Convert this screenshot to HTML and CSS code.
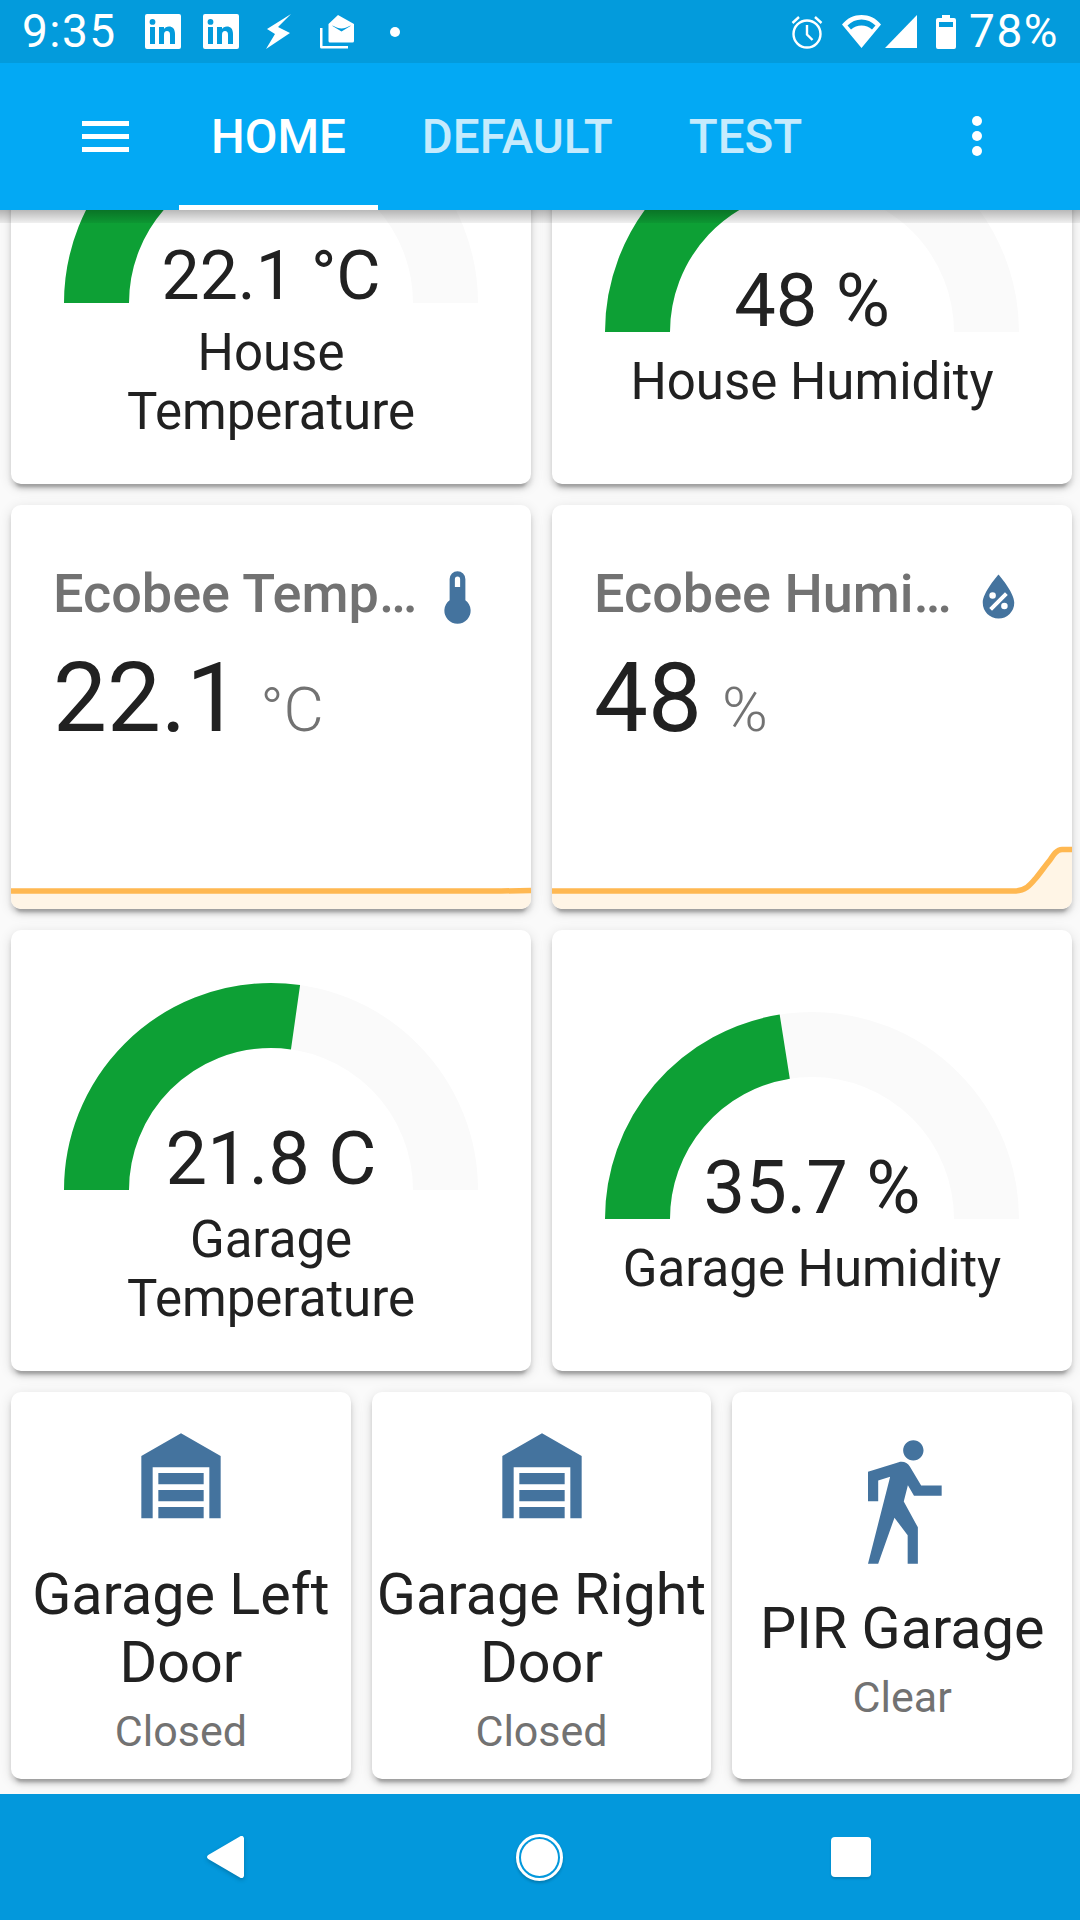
FILE: index.html
```html
<!DOCTYPE html>
<html lang="en">

<head>
    <meta charset="UTF-8">
    <meta name="viewport" content="width=device-width, initial-scale=1.0">
    <title>Home Assistant</title>
    <link rel="stylesheet" href="styles.css">
</head>

<body>
    <div class="screen">
        <div class="status-bar">
            <span class="clock">9:35</span>
            <div class="notify-icons">
                <svg class="linkedin" viewBox="0 0 36 35"><path fill-rule="evenodd" d="M2 0H34A2 2 0 0 1 36 2V33A2 2 0 0 1 34 35H2A2 2 0 0 1 0 33V2A2 2 0 0 1 2 0ZM5 13V30H10V13ZM7.5 5A2.9 2.9 0 1 0 7.5 10.8A2.9 2.9 0 1 0 7.5 5ZM14 13V30H19V21C19 18 20 17 22 17C24 17 25 18 25 21V30H30V20C30 15 27.5 12.6 24 12.6C21.5 12.6 20 13.6 19 15V13Z"/></svg>
                <svg class="linkedin" viewBox="0 0 36 35"><path fill-rule="evenodd" d="M2 0H34A2 2 0 0 1 36 2V33A2 2 0 0 1 34 35H2A2 2 0 0 1 0 33V2A2 2 0 0 1 2 0ZM5 13V30H10V13ZM7.5 5A2.9 2.9 0 1 0 7.5 10.8A2.9 2.9 0 1 0 7.5 5ZM14 13V30H19V21C19 18 20 17 22 17C24 17 25 18 25 21V30H30V20C30 15 27.5 12.6 24 12.6C21.5 12.6 20 13.6 19 15V13Z"/></svg>
                <svg class="bolt" viewBox="0 0 25 35"><path d="M25 0L12 13L24 19L0 35L9 20L1 15Z"/></svg>
                <svg class="mail" viewBox="0 0 34 34"><path d="M17 0L33 9V26A1.500 1.500 0 0 1 31.500 27.500H9A1.500 1.500 0 0 1 7.500 26V9ZM11.500 11L20.500 16.500L29.500 11L29.500 10.500C26 12.500 23 13.500 20.500 13.500C18 13.500 15 12.500 11.500 10.500Z" transform="translate(1 0)" fill-rule="evenodd"/><path d="M0 13H2.500V31H28V33.500H1.500A1.500 1.500 0 0 1 0 32Z"/></svg>
                <span class="notify-dot"></span>
            </div>
            <div class="system-icons">
                <svg class="alarm" viewBox="0 0 32 34" fill="none" stroke="#fff" stroke-width="2.400">
                    <circle cx="16" cy="19" r="13.500"/>
                    <path d="M16 10V19.500L21.500 25M1.500 8L8 2M30.500 8L24 2"/>
                </svg>
                <svg class="wifi" viewBox="0 0 39 33"><path fill-rule="evenodd" d="M19.500 0C27 0 33.500 2.700 39 9.500L19.500 33L0 9.500C5.500 2.700 12 0 19.500 0ZM19.500 4.500C14 4.500 9.500 6.500 5.500 10.500L9 14.500C12 12 15.500 10.500 19.500 10.500C23.500 10.500 27 12 30 14.500L33.500 10.500C29.500 6.500 25 4.500 19.500 4.500Z"/></svg>
                <svg class="signal" viewBox="0 0 32 33"><path d="M32 0V33H0Z"/></svg>
                <svg class="battery" viewBox="0 0 20 34"><path fill-rule="evenodd" d="M6 0H14V3H18A2 2 0 0 1 20 5V32A2 2 0 0 1 18 34H2A2 2 0 0 1 0 32V5A2 2 0 0 1 2 3H6ZM3 7V12H17V7Z"/></svg>
                <span class="battery-level">78%</span>
            </div>
        </div>

        <div class="toolbar">
            <div class="menu-button"><span></span><span></span><span></span></div>
            <div class="tabs">
                <div class="tab active">HOME</div>
                <div class="tab">DEFAULT</div>
                <div class="tab">TEST</div>
            </div>
            <div class="overflow-button"><span></span><span></span><span></span></div>
        </div>

        <div class="content">
            <div class="view">
                <div class="row">
                    <div class="card gauge-card">
                        <div class="gauge">
                            <svg viewBox="0 0 414 207">
                                <path class="gauge-track" d="M32.500 207A174.500 174.500 0 0 1 381.500 207"/>
                                <path class="gauge-fill" pathLength="100" stroke-dasharray="55 100" d="M32.500 207A174.500 174.500 0 0 1 381.500 207"/>
                            </svg>
                            <div class="gauge-value long">22.1 °C</div>
                        </div>
                        <div class="gauge-name">House<br>Temperature</div>
                    </div>
                    <div class="card gauge-card">
                        <div class="gauge">
                            <svg viewBox="0 0 414 207">
                                <path class="gauge-track" d="M32.500 207A174.500 174.500 0 0 1 381.500 207"/>
                                <path class="gauge-fill" pathLength="100" stroke-dasharray="48 100" d="M32.500 207A174.500 174.500 0 0 1 381.500 207"/>
                            </svg>
                            <div class="gauge-value">48 %</div>
                        </div>
                        <div class="gauge-name">House Humidity</div>
                    </div>
                </div>

                <div class="row">
                    <div class="card sensor-card">
                        <div class="sensor-header">
                            <div class="sensor-name">Ecobee Temp…</div>
                            <svg class="sensor-icon" viewBox="0 0 24 24"><path d="M15,13V5A3,3 0 0,0 9,5V13A5,5 0 1,0 15,13M12,4A1,1 0 0,1 13,5V8H11V5A1,1 0 0,1 12,4Z"/></svg>
                        </div>
                        <div class="sensor-state"><span class="sensor-value">22.1</span><span class="sensor-unit">°C</span></div>
                        <svg class="sparkline" viewBox="0 0 520 65">
                            <path class="spark-fill" d="M0 47H490L520 46.500V65H0Z"/>
                            <path class="spark-line" d="M0 47H490L520 46.500"/>
                        </svg>
                    </div>
                    <div class="card sensor-card">
                        <div class="sensor-header">
                            <div class="sensor-name">Ecobee Humi…</div>
                            <svg class="sensor-icon" viewBox="0 0 24 24"><path d="M12,3.25C12,3.25 6,10 6,14C6,17.32 8.69,20 12,20A6,6 0 0,0 18,14C18,10 12,3.25 12,3.25M14.47,9.97L15.53,11.03L9.53,17.03L8.47,15.97M9.75,10A1.25,1.25 0 0,1 11,11.25A1.25,1.25 0 0,1 9.75,12.5A1.25,1.25 0 0,1 8.5,11.25A1.25,1.25 0 0,1 9.75,10M14.25,14A1.25,1.25 0 0,1 15.5,15.25A1.25,1.25 0 0,1 14.25,16.5A1.25,1.25 0 0,1 13,15.25A1.25,1.25 0 0,1 14.25,14Z"/></svg>
                        </div>
                        <div class="sensor-state"><span class="sensor-value">48</span><span class="sensor-unit">%</span></div>
                        <svg class="sparkline" viewBox="0 0 520 65">
                            <path class="spark-fill" d="M0 47H462C474 47 479 40 484 34C489 28 493 22 498 16C502 10 505 5.500 510 5.500H520V65H0Z"/>
                            <path class="spark-line" d="M0 47H462C474 47 479 40 484 34C489 28 493 22 498 16C502 10 505 5.500 510 5.500H520"/>
                        </svg>
                    </div>
                </div>

                <div class="row">
                    <div class="card gauge-card">
                        <div class="gauge">
                            <svg viewBox="0 0 414 207">
                                <path class="gauge-track" d="M32.500 207A174.500 174.500 0 0 1 381.500 207"/>
                                <path class="gauge-fill" pathLength="100" stroke-dasharray="54.500 100" d="M32.500 207A174.500 174.500 0 0 1 381.500 207"/>
                            </svg>
                            <div class="gauge-value">21.8 C</div>
                        </div>
                        <div class="gauge-name">Garage<br>Temperature</div>
                    </div>
                    <div class="card gauge-card">
                        <div class="gauge">
                            <svg viewBox="0 0 414 207">
                                <path class="gauge-track" d="M32.500 207A174.500 174.500 0 0 1 381.500 207"/>
                                <path class="gauge-fill" pathLength="100" stroke-dasharray="45 100" d="M32.500 207A174.500 174.500 0 0 1 381.500 207"/>
                            </svg>
                            <div class="gauge-value">35.7 %</div>
                        </div>
                        <div class="gauge-name">Garage Humidity</div>
                    </div>
                </div>

                <div class="row">
                    <div class="card entity-card">
                        <svg class="entity-icon" viewBox="0 0 24 24"><path d="M19,20H17V11H7V20H5V9L12,5L19,9V20M8,12H16V14H8V12M8,15H16V17H8V15M16,18V20H8V18H16Z"/></svg>
                        <div class="entity-name">Garage Left Door</div>
                        <div class="entity-state">Closed</div>
                    </div>
                    <div class="card entity-card">
                        <svg class="entity-icon" viewBox="0 0 24 24"><path d="M19,20H17V11H7V20H5V9L12,5L19,9V20M8,12H16V14H8V12M8,15H16V17H8V15M16,18V20H8V18H16Z"/></svg>
                        <div class="entity-name">Garage Right Door</div>
                        <div class="entity-state">Closed</div>
                    </div>
                    <div class="card entity-card">
                        <svg class="entity-icon" viewBox="0 0 24 24"><path d="M14.12,10H19V8.2H15.38L13.38,4.87C13.08,4.37 12.54,4.03 11.92,4.03C11.74,4.03 11.58,4.06 11.42,4.11L6,5.8V11H7.8V7.33L9.91,6.67L6,22H7.8L10.67,13.89L13,17V22H14.8V15.59L12.31,11.05L13.04,8.18M14,3.8C15,3.8 15.8,3 15.8,2C15.8,1 15,0.2 14,0.2C13,0.2 12.2,1 12.2,2C12.2,3 13,3.8 14,3.8Z"/></svg>
                        <div class="entity-name">PIR Garage</div>
                        <div class="entity-state">Clear</div>
                    </div>
                </div>
            </div>
        </div>

        <div class="nav-bar">
            <svg class="nav-back" viewBox="0 0 37 42"><path d="M37 2.500V39.500C37 41.500 35 42.800 33.300 41.700L1.200 23C-0.400 22 -0.400 20 1.200 19L33.300 0.300C35 -0.800 37 0.500 37 2.500Z"/></svg>
            <span class="nav-home"></span>
            <span class="nav-recent"></span>
        </div>
    </div>
</body>

</html>
```

FILE: styles.css
```css
* {
    box-sizing: border-box;
}

body {
    margin: 0;
    font-family: Roboto, 'Noto Sans', sans-serif;
    background-color: #fafafa;
    color: #212121;
}

.screen {
    display: flex;
    flex-direction: column;
    height: 1920px;
    overflow: hidden;
}

/* Android status bar */
.status-bar {
    display: flex;
    align-items: center;
    flex: none;
    height: 63px;
    padding: 0 21px 0 22px;
    background-color: #039bdc;
    color: #fff;
    fill: #fff;
}

.clock,
.battery-level {
    font-size: 46px;
    line-height: 63px;
    letter-spacing: 1.500px;
}

.notify-icons {
    display: flex;
    align-items: center;
    margin-left: 28px;
}

.linkedin {
    width: 36px;
    height: 35px;
    margin-right: 22px;
}

.bolt {
    width: 25px;
    height: 35px;
    margin-left: 5px;
    margin-right: 29px;
}

.mail {
    width: 34px;
    height: 34px;
    margin-right: 36px;
}

.notify-dot {
    width: 10px;
    height: 10px;
    border-radius: 50%;
    background-color: #fff;
}

.system-icons {
    display: flex;
    align-items: center;
    margin-left: auto;
}

.alarm {
    width: 32px;
    height: 34px;
    margin-right: 19px;
}

.wifi {
    width: 39px;
    height: 33px;
    margin-right: 4px;
}

.signal {
    width: 32px;
    height: 33px;
    margin-right: 19px;
}

.battery {
    width: 20px;
    height: 34px;
    margin-right: 13px;
}

/* Toolbar with the view tabs */
.toolbar {
    position: relative;
    z-index: 2;
    display: flex;
    flex: none;
    height: 147px;
    background-color: #03a9f4;
}

/* the header's shadow ends in a hard edge over the cards */
.toolbar::after {
    content: "";
    position: absolute;
    top: 100%;
    left: 0;
    right: 0;
    height: 13px;
    background: linear-gradient(rgba(0, 0, 0, 0.28), rgba(0, 0, 0, 0.06));
}

.menu-button {
    display: flex;
    flex-direction: column;
    gap: 8px;
    width: 47px;
    margin: 58px 0 0 82px;
}

.menu-button span {
    height: 5px;
    background-color: #fff;
}

.tabs {
    display: flex;
    gap: 12px;
    margin-left: 50px;
}

.tab {
    height: 147px;
    padding: 0 32px;
    font-size: 47.500px;
    font-weight: 500;
    line-height: 148px;
    color: #c5ebfd;
}

.tab.active {
    color: #fff;
    border-bottom: 5px solid #fff;
}

.overflow-button {
    display: flex;
    flex-direction: column;
    gap: 5px;
    margin: 53px 0 0 auto;
    padding-right: 98px;
}

.overflow-button span {
    width: 10px;
    height: 10px;
    border-radius: 50%;
    background-color: #fff;
}

/* Scrolled cards area */
.content {
    flex: 1;
    overflow: hidden;
}

.view {
    display: flex;
    flex-direction: column;
    gap: 21px;
    margin-top: -167px;
    padding: 0 8px 0 11px;
}

.row {
    display: flex;
    gap: 21px;
}

.card {
    position: relative;
    flex: 1;
    min-width: 0;
    background: #fff;
    border-radius: 10px;
    box-shadow: 0 5px 5px rgba(0, 0, 0, 0.14), 0 3px 13px rgba(0, 0, 0, 0.12), 0 8px 3px -5px rgba(0, 0, 0, 0.2);
}

/* Gauge cards */
.gauge-card {
    display: flex;
    flex-direction: column;
    align-items: center;
    justify-content: center;
    height: 441px;
    padding: 10px 16px 0;
    text-align: center;
}

.gauge {
    position: relative;
    width: 414px;
    height: 207px;
}

.gauge svg {
    display: block;
    width: 100%;
    height: 100%;
}

.gauge-track,
.gauge-fill {
    fill: none;
    stroke-width: 65;
}

.gauge-track {
    stroke: #fafafa;
}

.gauge-fill {
    stroke: #0da035;
}

.gauge-value {
    position: absolute;
    left: 0;
    right: 0;
    bottom: -10px;
    font-size: 74px;
    line-height: 82px;
}

.gauge-value.long {
    bottom: -14px;
    font-size: 68px;
}

.gauge-name {
    margin-top: 21px;
    font-size: 51px;
    line-height: 58.500px;
}

/* Sensor cards with a small graph */
.sensor-card {
    height: 404px;
    padding: 61px 42px 0;
    overflow: hidden;
}

.sensor-header {
    display: flex;
    justify-content: space-between;
    height: 63px;
}

.sensor-name {
    font-size: 54px;
    font-weight: 500;
    line-height: 55px;
    color: #727272;
    white-space: nowrap;
}

.sensor-icon {
    flex: none;
    width: 63px;
    height: 63px;
    fill: #44739e;
}

.sensor-state {
    display: flex;
    align-items: baseline;
    margin-top: 19px;
}

.sensor-value {
    font-size: 96px;
    line-height: 100px;
}

.sensor-unit {
    margin-left: 20px;
    font-size: 62px;
    font-weight: 300;
    color: #727272;
}

.sparkline {
    position: absolute;
    left: 0;
    bottom: 0;
    display: block;
    width: 100%;
    height: 65px;
}

.spark-fill {
    fill: #fff5e6;
}

.spark-line {
    fill: none;
    stroke: #ffb851;
    stroke-width: 5.500;
}

/* Entity buttons in the last row */
.entity-card {
    display: flex;
    flex-direction: column;
    align-items: center;
    justify-content: center;
    height: 387px;
    padding: 0 4px 10px;
    text-align: center;
}

.entity-icon {
    flex: none;
    width: 136px;
    height: 136px;
    fill: #44739e;
}

.entity-name {
    margin-top: 20px;
    font-size: 57.500px;
    line-height: 67.700px;
}

.entity-state {
    margin-top: 10px;
    font-size: 43px;
    line-height: 50px;
    color: #727272;
}

/* Android navigation bar */
.nav-bar {
    display: flex;
    align-items: center;
    flex: none;
    height: 126px;
    background-color: #0398dc;
}

.nav-back {
    width: 37px;
    height: 42px;
    margin-left: 207px;
    fill: #fff;
    filter: drop-shadow(0 2px 2px rgba(0, 0, 0, 0.2));
}

.nav-home {
    width: 47px;
    height: 47px;
    margin-left: 272px;
    padding: 2px;
    border: 3px solid #fff;
    border-radius: 50%;
    background-color: #fff;
    background-clip: content-box;
    box-shadow: 0 2px 3px rgba(0, 0, 0, 0.2);
}

.nav-recent {
    width: 40px;
    height: 40px;
    margin-left: 268px;
    border-radius: 4px;
    background-color: #fff;
    box-shadow: 0 2px 2px rgba(0, 0, 0, 0.15);
}
```
